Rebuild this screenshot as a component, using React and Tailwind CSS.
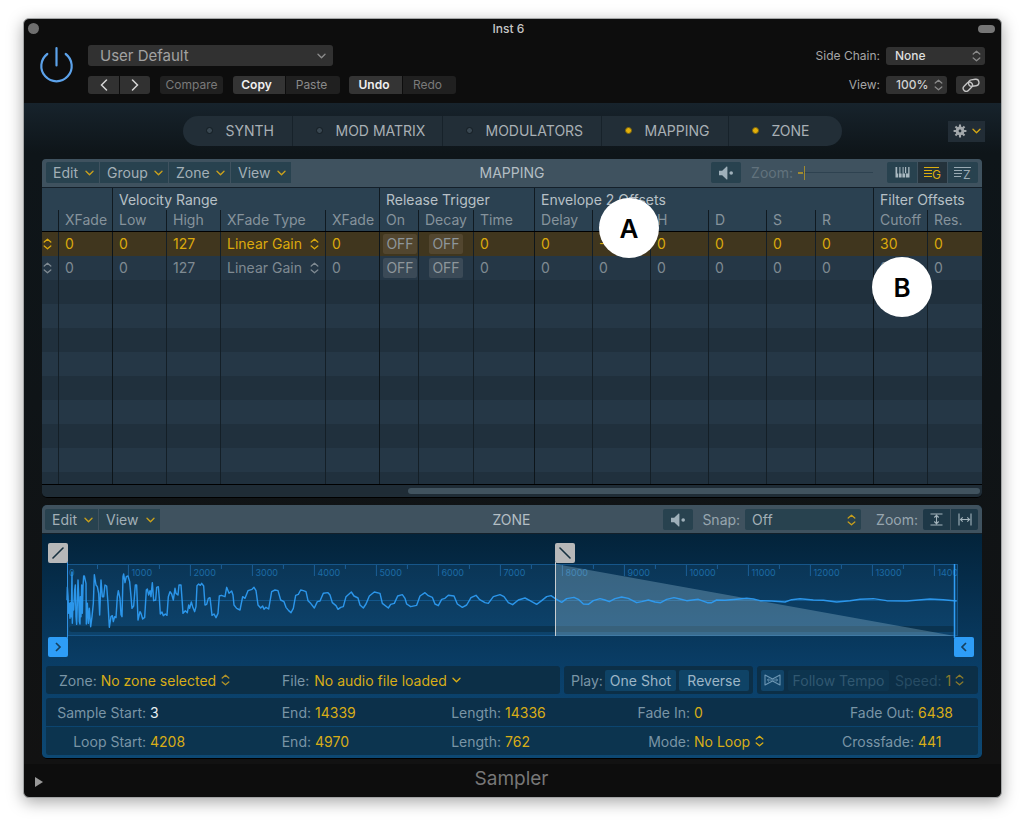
import React from "react";

const WAVE =
  "111,391 112,352 114,380 116,430 118,400 120,445 122,398 124,440 126,306 127,460 129,400 131,420 134,360 136,345 138,440 140,463 142,400 144,330 146,372 148,455 150,462 151,380 153,440 155,345 157,430 159,350 161,318 163,318 168,340 169,462 172,400 175,460 178,415 182,470 186,440 190,400 193,314 198,345 202,350 206,370 209,435 213,330 217,380 221,380 225,345 230,348 234,400 238,472 243,440 247,437 250,455 254,440 258,443 262,380 265,362 270,385 273,434 276,440 279,320 281,312 285,338 289,320 294,318 299,335 303,380 306,415 311,408 314,370 316,345 320,345 324,450 330,425 333,430 338,447 344,442 349,360 352,357 356,375 360,362 363,380 367,338 371,392 377,390 380,352 385,350 388,385 391,432 396,426 400,437 406,432 411,436 415,380 420,365 425,372 430,390 435,355 438,370 444,375 447,345 453,345 457,400 459,430 466,422 472,428 476,405 479,415 484,396 488,410 494,425 498,410 501,347 506,342 511,346 515,340 521,348 525,405 530,403 535,385 540,383 546,436 552,432 558,443 564,430 568,378 574,376 585,380 590,352 597,370 605,363 609,375 612,405 620,415 630,420 638,380 645,385 654,362 666,358 672,352 678,362 684,405 692,414 698,408 702,418 708,412 716,417 725,365 735,360 744,362 752,390 762,395 768,412 776,422 783,428 790,415 797,376 805,373 812,360 820,362 828,365 834,392 842,400 853,414 862,395 870,393 880,370 894,368 900,375 907,398 918,407 924,418 932,412 940,410 948,380 964,366 972,378 984,384 990,405 1000,414 1008,402 1018,378 1033,366 1050,370 1057,400 1075,414 1082,403 1093,400 1103,378 1117,374 1125,385 1130,402 1142,410 1160,406 1170,378 1185,368 1195,377 1207,382 1215,402 1225,407 1235,388 1245,385 1255,376 1272,378 1282,402 1297,412 1310,405 1323,383 1338,376 1348,388 1365,398 1375,400 1390,380 1410,374 1422,380 1435,398 1448,404 1465,390 1485,384 1500,392 1520,403 1535,392 1550,380 1563,377 1575,385 1595,397 1610,386 1632,382 1645,388 1660,402 1675,403 1690,392 1710,386 1725,390 1738,395 1755,386 1775,381 1795,385 1820,398 1835,395 1855,390 1875,396 1892,398 1910,388 1932,383 1950,387 1970,392 2005,388 2032,398 2045,398 2060,390 2085,391 2120,388 2150,385 2170,387 2190,392 2225,393 2265,396 2285,389 2310,386 2350,390 2380,391 2420,396 2460,392 2490,388 2530,386 2570,392 2630,393 2700,387 2740,389 2780,393";

const RULER = Array.from({ length: 14 }, (_, i) => (i + 1) * 1000);

const COLUMNS = [17, 54, 54, 54, 105, 54, 39, 55, 61, 58, 58, 58, 58, 49, 58, 54, 54];
const GROUPS = [
  { name: "", span: 2 },
  { name: "Velocity Range", span: 4 },
  { name: "Release Trigger", span: 3 },
  { name: "Envelope 2 Offsets", span: 6 },
  { name: "Filter Offsets", span: 2 },
];
const HEADS = ["", "XFade", "Low", "High", "XFade Type", "XFade", "On", "Decay", "Time", "Delay", "A", "H", "D", "S", "R", "Cutoff", "Res."];
const GROUP_ENDS = [1, 5, 8, 14];
const ROWS = [
  ["^", "0", "0", "127", "Linear Gain", "0", "OFF", "OFF", "0", "0", "-10", "0", "0", "0", "0", "30", "0"],
  ["^", "0", "0", "127", "Linear Gain", "0", "OFF", "OFF", "0", "0", "0", "0", "0", "0", "0", "0", "0"],
];

function Chevron({ className = "" }) {
  return (
    <svg viewBox="0 0 9 6" className={`h-[6px] w-[9px] shrink-0 ${className}`} fill="none" stroke="currentColor" strokeWidth="1.4" strokeLinecap="round" strokeLinejoin="round" aria-hidden="true">
      <path d="M1 1.2 4.5 4.7 8 1.2" />
    </svg>
  );
}

function UpDown({ className = "" }) {
  return (
    <svg viewBox="0 0 9 12" className={`pointer-events-none h-[12px] w-[9px] shrink-0 ${className}`} fill="none" stroke="currentColor" strokeWidth="1.3" strokeLinecap="round" strokeLinejoin="round" aria-hidden="true">
      <path d="M1.2 4 4.5 1.2 7.8 4M1.2 8 4.5 10.8 7.8 8" />
    </svg>
  );
}

function Speaker() {
  return (
    <svg viewBox="0 0 16 14" className="h-[14px] w-[16px] fill-[#9fb0ba]" aria-hidden="true">
      <path d="M1 4.8h3.2L8.6.6c.4-.3.8-.1.8.4v12c0 .5-.4.7-.8.4L4.2 9.2H1z" />
      <circle cx="13.2" cy="7" r="1.8" />
    </svg>
  );
}

function Gear() {
  return (
    <svg viewBox="-7 -7 14 14" className="h-[14px] w-[14px]" aria-hidden="true">
      <g stroke="#a3a8ab" strokeWidth="2.1">
        {[0, 45, 90, 135].map((a) => (
          <line key={a} x1="-6.4" x2="6.4" y1="0" y2="0" transform={`rotate(${a})`} />
        ))}
      </g>
      <circle r="4.4" fill="#a3a8ab" />
      <circle r="1.4" fill="#222d36" />
    </svg>
  );
}

function MenuButton({ children, className = "" }) {
  return (
    <button className={`flex items-center justify-between bg-[#28424f] pr-[5px] pl-[7px] text-[14px] text-[#a3b0b7] ${className}`}>
      {children}
      <Chevron className="text-[#c79f1c]" />
    </button>
  );
}

function Tab({ name, on, className }) {
  return (
    <button className={`flex h-full items-center gap-[13px] pb-px text-[14px] text-[#a9b0b5] ${className}`}>
      <span className={`h-[7px] w-[7px] rounded-full border ${on ? "border-[#7a6410] bg-[#e3b009]" : "border-[#131c22] bg-[#3a4852]"}`} />
      {name}
    </button>
  );
}

function Cell({ value, col, row }) {
  const selected = row === 0;
  if (value === "^")
    return (
      <button aria-label="Choose type" className="flex pl-px">
        <UpDown />
      </button>
    );
  if (value === "OFF")
    return (
      <button className={`block h-[20px] w-[34px] rounded-[2px] text-[14px] leading-[20px] text-[#8e969b] ${col === 6 ? "ml-[3px]" : "ml-[10px]"} ${selected ? "bg-[#52462f]" : "bg-[#3b4a57]"}`}>
        OFF
      </button>
    );
  if (value === "Linear Gain")
    return (
      <span className="flex items-center justify-between pr-[6px] pl-[6px]">
        <select aria-label="XFade Type" className="appearance-none bg-transparent">
          <option>Linear Gain</option>
        </select>
        <UpDown />
      </span>
    );
  return <span className="block pl-[6px]">{value}</span>;
}

function MappingTable() {
  return (
    <div className="h-[296px] overflow-hidden">
      <table className="w-full table-fixed border-separate border-spacing-0 text-left text-[14px] leading-[20px] whitespace-nowrap">
        <colgroup>
          {COLUMNS.map((w, i) => (
            <col key={i} style={{ width: w }} />
          ))}
        </colgroup>
        <thead className="bg-[#2b4151]">
          <tr>
            {GROUPS.map((g, i) => (
              <th key={i} colSpan={g.span} className={`h-[22px] p-0 pt-[2px] pl-[6px] font-normal text-[#b7c0c6] ${i < 4 ? "border-r border-[#101a21]" : ""}`}>
                {g.name}
              </th>
            ))}
          </tr>
          <tr>
            {HEADS.map((h, i) => (
              <th key={i} className="h-[22px] border-b border-black p-0 font-normal text-[#86939c]">
                <div className={`h-[21px] pl-[6px] leading-[19px] ${i < 16 ? "border-r border-[#101a21]" : ""}`}>{h}</div>
              </th>
            ))}
          </tr>
        </thead>
        <tbody>
          {Array.from({ length: 11 }, (_, r) => (
            <tr
              key={r}
              className={r === 0 ? "bg-[#40361e] text-[#dba90d]" : r % 2 ? "bg-[#253746] text-[#7f8a92]" : "bg-[#20303d]"}
            >
              {COLUMNS.map((_, c) => (
                <td key={c} className={`h-[24px] p-0 ${c < 16 ? "border-r" : ""} ${GROUP_ENDS.includes(c) ? "border-[#0d151a]" : "border-[#141f27]"}`}>
                  {ROWS[r] ? <Cell value={ROWS[r][c]} col={c} row={r} /> : null}
                </td>
              ))}
            </tr>
          ))}
        </tbody>
      </table>
    </div>
  );
}

function Waveform() {
  return (
    <div className="relative">
      <svg viewBox="0 0 940 132" className="block w-full" role="img" aria-label="Sample waveform">
        <defs>
          <linearGradient id="waveFill" x1="0" y1="0" x2="0" y2="1">
            <stop offset="0" stopColor="#0a3556" />
            <stop offset="1" stopColor="#0d436c" />
          </linearGradient>
          <clipPath id="rulerClip">
            <rect x="25" y="30" width="890" height="72" />
          </clipPath>
        </defs>
        <rect x="25" y="30" width="890" height="72" fill="url(#waveFill)" />
        <rect x="27" y="92" width="886" height="6" rx="3" fill="#0a3350" />
        <path d="M25 66.500H915" stroke="#12578c" />
        <rect x="25.500" y="30.500" width="890" height="71" fill="none" stroke="#16568a" />
        <g clipPath="url(#rulerClip)" fontSize="9" fontFamily="Inter, sans-serif" fill="#1c6ba5">
          <text x="27" y="42">0</text>
          <path d="M55.500 31v4" stroke="#1b5f96" />
          {RULER.map((n) => {
            const x = 24.4 + (n / 1000) * 62;
            return (
              <g key={n}>
                <path d={`M${x} 31v11M${x + 31} 31v4`} stroke="#1b5f96" />
                <text x={x + 3} y="42">{n}</text>
              </g>
            );
          })}
        </g>
        <polygon points="513.500,30 513.500,102 913,102" fill="#a4cde2" fillOpacity="0.3" />
        <g transform="translate(-12 -64) scale(0.33333)">
          <polyline points={WAVE} fill="none" stroke="#2f9df5" strokeWidth="4.300" strokeLinejoin="round" opacity="0.92" />
        </g>
        <path d="M513.500 28V102" stroke="#c9cdd0" />
        <path d="M25.500 28V104" stroke="#2f8fe0" strokeWidth="1" />
        <path d="M912.500 30V104" stroke="#2f9df5" strokeWidth="1.500" />
      </svg>
      <button aria-label="Fade in" className="absolute top-[7%] left-[0.600%] flex h-[20px] w-[20px] items-center justify-center rounded-[2px] bg-[#b7b8b9]">
        <svg viewBox="0 0 12 12" className="h-[12px] w-[12px]" stroke="#16303f" strokeWidth="1.6" strokeLinecap="round"><path d="M1 11 11 1" /></svg>
      </button>
      <button aria-label="Fade out" className="absolute top-[7%] left-[54.570%] flex h-[20px] w-[20px] items-center justify-center rounded-[2px] bg-[#b7b8b9]">
        <svg viewBox="0 0 12 12" className="h-[12px] w-[12px]" stroke="#16303f" strokeWidth="1.6" strokeLinecap="round"><path d="M1 1 11 11" /></svg>
      </button>
      <button aria-label="Sample start" className="absolute top-[78%] left-[0.600%] flex h-[20px] w-[20px] items-center justify-center rounded-[2px] bg-[#2e9df7]">
        <svg viewBox="0 0 8 10" className="h-[10px] w-[8px]" fill="none" stroke="#16405f" strokeWidth="1.7"><path d="M2 1 6 5 2 9" /></svg>
      </button>
      <button aria-label="Sample end" className="absolute top-[78%] left-[97%] flex h-[20px] w-[20px] items-center justify-center rounded-[2px] bg-[#2e9df7]">
        <svg viewBox="0 0 8 10" className="h-[10px] w-[8px]" fill="none" stroke="#16405f" strokeWidth="1.7"><path d="M6 1 2 5 6 9" /></svg>
      </button>
    </div>
  );
}

function Field({ id, label, value, white }) {
  return (
    <div className="flex items-center gap-[4px]">
      <label htmlFor={id} className="w-[100px] shrink-0 text-right text-[#7a95a6]">{label}</label>
      <input id={id} defaultValue={value} className={`w-[48px] bg-transparent outline-none ${white ? "text-[#e8eef2]" : "text-[#d8ad17]"}`} />
    </div>
  );
}

export default function App() {
  return (
    <div className="min-h-screen bg-white pt-[18px] pr-[22px] pb-[26px] pl-[23px] font-['Inter',sans-serif] text-[14px]">
      <div className="overflow-hidden rounded-[6px] border border-[#a3a5a6] bg-[#0d0d0d] shadow-[0_4px_16px_rgba(0,0,0,0.35)]">
        <header className="h-[84px] text-[12px]">
          <div className="flex h-[19px] items-center justify-between pr-[6px] pl-[4px]">
            <button aria-label="Close" className="h-[11px] w-[11px] rounded-full bg-[#6f6f6f]" />
            <h1 className="text-[12px] font-medium text-[#c6c6c6]">Inst 6</h1>
            <button aria-label="Collapse" className="h-[8px] w-[17px] rounded-full bg-[#767676]" />
          </div>
          <div className="flex justify-between pt-[7px] pr-[16px] pl-[15px]">
            <div className="flex">
              <button aria-label="Power" className="h-[38px] w-[35px]">
                <svg viewBox="0 0 35 38" className="h-[38px] w-[35px]" fill="none" stroke="#5ca2ea" strokeWidth="2.200" strokeLinecap="round">
                  <path d="M17.500 3V20.500M8.300 9a15.200 15.200 0 1 0 18.400 0" />
                </svg>
              </button>
              <div className="ml-[14px] flex flex-col gap-[10px]">
                <div className="flex h-[21px] w-[245px] items-center rounded-[3px] bg-[#313131] pr-[7px]">
                  <select aria-label="Preset" className="flex-1 appearance-none bg-transparent pl-[12px] text-[15px] leading-[20px] text-[#a2a2a2]">
                    <option>User Default</option>
                  </select>
                  <Chevron className="text-[#8a8a8a]" />
                </div>
                <div className="flex h-[18px] items-stretch text-[12px] leading-[18px]">
                  <button aria-label="Previous preset" className="flex w-[31px] items-center justify-center rounded-l-[3px] bg-[#313131]">
                    <svg viewBox="0 0 8 12" className="h-[12px] w-[8px]" fill="none" stroke="#d5d5d5" strokeWidth="1.500" strokeLinecap="round"><path d="M6.500 1 1.500 6 6.500 11" /></svg>
                  </button>
                  <button aria-label="Next preset" className="ml-px flex w-[30px] items-center justify-center rounded-r-[3px] bg-[#313131]">
                    <svg viewBox="0 0 8 12" className="h-[12px] w-[8px]" fill="none" stroke="#d5d5d5" strokeWidth="1.500" strokeLinecap="round"><path d="M1.500 1 6.500 6 1.500 11" /></svg>
                  </button>
                  <button className="ml-[10px] w-[63px] rounded-[3px] bg-[#202020] text-[#7a7a7a]">Compare</button>
                  <button className="ml-[10px] w-[52px] rounded-l-[3px] bg-[#343434] pr-[5px] font-semibold text-[#f0f0f0]">Copy</button>
                  <button className="ml-px w-[54px] rounded-r-[3px] bg-[#202020] pr-[3px] text-[#8a8a8a]">Paste</button>
                  <button className="ml-[9px] w-[53px] rounded-l-[3px] bg-[#343434] pr-[3px] font-semibold text-[#f0f0f0]">Undo</button>
                  <button className="ml-px w-[53px] rounded-r-[3px] bg-[#202020] pr-[4px] text-[#7a7a7a]">Redo</button>
                </div>
              </div>
            </div>
            <div className="flex flex-col gap-[11px] pt-[2px] leading-[18px] text-[#a6a6a6]">
              <div className="flex items-center justify-end gap-[6px]">
                <label htmlFor="side">Side Chain:</label>
                <div className="flex h-[18px] w-[99px] items-center rounded-[3px] bg-[#313131] pr-[4px] pl-[9px]">
                  <select id="side" className="flex-1 appearance-none bg-transparent font-medium text-[#dedede]"><option>None</option></select>
                  <UpDown className="text-[#8a8a8a]" />
                </div>
              </div>
              <div className="flex items-center justify-end">
                <label htmlFor="view">View:</label>
                <div className="ml-[6px] flex h-[18px] w-[61px] items-center rounded-[3px] bg-[#313131] pr-[4px] pl-[10px]">
                  <select id="view" className="flex-1 appearance-none bg-transparent font-medium text-[#d0d0d0]"><option>100%</option></select>
                  <UpDown className="text-[#8a8a8a]" />
                </div>
                <button aria-label="Link" className="ml-[9px] flex h-[18px] w-[29px] items-center justify-center rounded-[3px] bg-[#313131]">
                  <svg viewBox="0 0 18 14" className="h-[14px] w-[18px]" fill="none" stroke="#c4c4c4" strokeWidth="1.400">
                    <rect x="6.500" y="1.500" width="10.500" height="6.500" rx="3.250" transform="rotate(-8 12 5)" />
                    <rect x="0.500" y="5.600" width="10.500" height="6" rx="3" transform="rotate(-45 6 8.600)" />
                  </svg>
                </button>
              </div>
            </div>
          </div>
        </header>

        <main className="bg-[linear-gradient(#17232c,#0e1519_50px,#0f1417_300px,#121212)] pr-[19px] pb-[5px] pl-[18px]">
          <div className="grid h-[56px] grid-cols-[1fr_auto_1fr] items-center">
            <span />
            <nav className="flex h-[30px] divide-x divide-[#17222a] overflow-hidden rounded-full bg-[#222e37]">
              <Tab name="SYNTH" className="w-[110px] pl-[23px]" />
              <Tab name="MOD MATRIX" className="w-[150px] pl-[23px]" />
              <Tab name="MODULATORS" className="w-[159px] pl-[23px]" />
              <Tab name="MAPPING" on className="w-[127px] pl-[23px]" />
              <Tab name="ZONE" on className="w-[113px] pl-[23px]" />
            </nav>
            <button aria-label="Settings" className="-mr-[3px] flex h-[21px] w-[37px] items-center justify-between justify-self-end bg-[#222d36] pr-[4px] pl-[5px]">
              <Gear />
              <Chevron className="text-[#d0a414]" />
            </button>
          </div>

          <section className="relative rounded-[5px] border-b border-black bg-[#1f2c36]">
            <div className="grid h-[29px] grid-cols-[1fr_auto_1fr] items-center rounded-t-[4px] border-b border-[#14202a] bg-[#3f525f] px-[4px] pb-px">
              <div className="flex h-[21px] gap-px overflow-hidden rounded-[2px]">
                <MenuButton className="w-[53px]">Edit</MenuButton>
                <MenuButton className="w-[68px]">Group</MenuButton>
                <MenuButton className="w-[61px]">Zone</MenuButton>
                <MenuButton className="w-[60px]">View</MenuButton>
              </div>
              <h2 className="text-[14px] text-[#b4bec4]">MAPPING</h2>
              <div className="flex items-center justify-end">
                <button aria-label="Audition" className="flex h-[21px] w-[30px] items-center justify-center rounded-[2px] bg-[#28424f]"><Speaker /></button>
                <label htmlFor="zoom" className="ml-[10px] text-[#62727d]">Zoom:</label>
                <input id="zoom" type="range" min="0" max="100" defaultValue="0" disabled className="ml-[5px] h-[20px] w-[75px] appearance-none bg-[linear-gradient(#2e4250,#2e4250)] bg-[length:100%_1px] bg-center bg-no-repeat [&::-webkit-slider-thumb]:h-[16px] [&::-webkit-slider-thumb]:w-[8px] [&::-webkit-slider-thumb]:appearance-none [&::-webkit-slider-thumb]:bg-[linear-gradient(#a08a30,#a08a30),linear-gradient(#a08a30,#a08a30)] [&::-webkit-slider-thumb]:bg-[length:1px_14px,5px_2px] [&::-webkit-slider-thumb]:bg-[position:6px_center,left_center] [&::-webkit-slider-thumb]:bg-no-repeat" />
                <div className="ml-[14px] flex h-[21px] gap-px overflow-hidden rounded-[2px]">
                  <button aria-label="Keyboard view" className="flex w-[30px] items-center justify-center bg-[#28424f]">
                    <svg viewBox="0 0 15 11" className="h-[11px] w-[15px]" aria-hidden="true">
                      <rect x="0.500" y="0" width="14" height="10.500" fill="#a9b8c0" />
                      <path d="M2.200 0h2.200v6.500H2.200zM5.400 0h2.200v6.500H5.400zM8.600 0h1.400v6.500H8.600zM11.200 0h2v6.500h-2z" fill="#28424f" />
                      <path d="M3.500 6v5M7 6v5M10.500 6v5" stroke="#28424f" strokeWidth="0.800" />
                    </svg>
                  </button>
                  <button aria-label="Group view" className="flex w-[29px] items-center justify-center bg-[#24323b] text-[#dcae10]">
                    <svg viewBox="0 0 22 20" className="h-[20px] w-[22px]" aria-hidden="true">
                      <path d="M2 4.500h15M2 7.500h8M2 10.500h8M2 13.500h8" stroke="currentColor" strokeWidth="1.200" />
                      <text x="10" y="16" fontSize="12" fontFamily="Inter, sans-serif" fill="currentColor">G</text>
                    </svg>
                  </button>
                  <button aria-label="Zone view" className="flex w-[30px] items-center justify-center bg-[#28424f] text-[#9aaab3]">
                    <svg viewBox="0 0 22 20" className="h-[20px] w-[22px]" aria-hidden="true">
                      <path d="M2 4.500h17M2 7.500h8M2 10.500h8M2 13.500h7" stroke="currentColor" strokeWidth="1.100" />
                      <text x="11" y="16" fontSize="12" fontFamily="Inter, sans-serif" fill="currentColor">Z</text>
                    </svg>
                  </button>
                </div>
              </div>
            </div>
            <MappingTable />
            <div className="flex h-[13px] items-center justify-end border-t border-black pr-[2px]">
              <div className="h-[6px] w-[61%] rounded-full bg-[#41535f]" />
            </div>
            <div className="absolute top-[39px] left-[557px] flex h-[60px] w-[60px] items-center justify-center rounded-full bg-white text-[26px] font-semibold text-black">A</div>
            <div className="absolute top-[98px] left-[830px] flex h-[60px] w-[60px] items-center justify-center rounded-full bg-white text-[26px] font-semibold text-black">B</div>
          </section>

          <section className="mt-[7px] overflow-hidden rounded-[5px] border-b border-black bg-[linear-gradient(#03233a_28px,#0a3f69_170px,#0d4873)]">
            <div className="grid h-[29px] grid-cols-[1fr_auto_1fr] items-center border-b border-[#14202a] bg-[#3f525f] pt-px pr-[4px] pl-[3px]">
              <div className="flex h-[21px] gap-px overflow-hidden rounded-[2px]">
                <MenuButton className="w-[53px]">Edit</MenuButton>
                <MenuButton className="w-[61px]">View</MenuButton>
              </div>
              <h2 className="text-[14px] text-[#b4bec4]">ZONE</h2>
              <div className="flex items-center justify-end text-[#98a6af]">
                <button aria-label="Audition" className="flex h-[21px] w-[30px] items-center justify-center rounded-[2px] bg-[#28424f]"><Speaker /></button>
                <label htmlFor="snap" className="ml-[9px]">Snap:</label>
                <div className="ml-[5px] flex h-[21px] w-[116px] items-center rounded-[2px] bg-[#28424f] pr-[5px] pl-[7px]">
                  <select id="snap" className="flex-1 appearance-none bg-transparent text-[#a3b0b7]"><option>Off</option></select>
                  <UpDown className="text-[#c79f1c]" />
                </div>
                <span className="ml-[15px]">Zoom:</span>
                <div className="ml-[5px] flex h-[21px] gap-px overflow-hidden rounded-[2px]">
                  <button aria-label="Zoom vertically" className="flex w-[27px] items-center justify-center bg-[#1e3847]">
                    <svg viewBox="0 0 13 13" className="h-[13px] w-[13px]" fill="none" stroke="#a3b4bd" strokeWidth="1.100"><path d="M.500 1h12M.500 12h12M6.500 2.500v8M4.300 4.500 6.500 2.300 8.700 4.500M4.300 8.500 6.500 10.700 8.700 8.500" /></svg>
                  </button>
                  <button aria-label="Zoom horizontally" className="flex w-[27px] items-center justify-center bg-[#1e3847]">
                    <svg viewBox="0 0 14 13" className="h-[13px] w-[14px]" fill="none" stroke="#a3b4bd" strokeWidth="1.100"><path d="M1 .500v12M13 .500v12M2.500 6.500h9M4.700 4.300 2.500 6.500 4.700 8.700M9.300 4.300 11.500 6.500 9.300 8.700" /></svg>
                  </button>
                </div>
              </div>
            </div>

            <Waveform />

            <div className="flex flex-col gap-[4px] px-[4px] pb-[3px]">
              <div className="flex h-[28px] gap-[4px]">
                <div className="flex flex-1 items-center rounded-[3px] bg-[#0c2f47] pl-[13px] text-[#7a95a6]">
                  <div className="flex w-[223px] items-center gap-[4px]">
                    <label htmlFor="zone">Zone:</label>
                    <select id="zone" className="appearance-none bg-transparent text-[#d8ad17]"><option>No zone selected</option></select>
                    <UpDown className="text-[#b0932a]" />
                  </div>
                  <div className="flex items-center gap-[5px]">
                    <label htmlFor="file">File:</label>
                    <select id="file" className="appearance-none bg-transparent text-[#d8ad17]"><option>No audio file loaded</option></select>
                    <Chevron className="text-[#d8ad17]" />
                  </div>
                </div>
                <div className="flex w-[189px] items-center rounded-[3px] bg-[#0c2f47] pl-[7px] text-[#7a95a6]">
                  Play:
                  <button className="ml-auto h-[21px] w-[71px] rounded-[2px] bg-[#0f4366] text-[#9db6c6]">One Shot</button>
                  <button className="mr-[4px] ml-[3px] h-[21px] w-[70px] rounded-[2px] bg-[#0f4366] text-[#9db6c6]">Reverse</button>
                </div>
                <div className="flex w-[221px] items-center rounded-[3px] bg-[#0c2f47] pl-[4px] text-[#274c64]">
                  <button aria-label="Flex" className="flex h-[21px] w-[23px] items-center justify-center rounded-[2px] bg-[#114468]">
                    <svg viewBox="0 0 17 12" className="h-[12px] w-[17px]" fill="none" stroke="#6c96b3" strokeWidth="1.100" strokeLinejoin="round" aria-hidden="true">
                      <path d="M1 1 8.500 5 16 1V11L8.500 7 1 11z" />
                      <path d="M3.500 6h10M5 4.400 3.400 6 5 7.600M12 4.400 13.600 6 12 7.600" strokeWidth="0.900" />
                    </svg>
                  </button>
                  <button disabled className="ml-[4px] h-[21px] w-[101px] rounded-[2px] bg-[#0d344e] text-[#315871]">Follow Tempo</button>
                  <label htmlFor="speed" className="ml-[6px]">Speed:</label>
                  <select id="speed" disabled className="ml-[4px] appearance-none bg-transparent text-[#8a7a2c] opacity-100"><option>1</option></select>
                  <UpDown className="ml-[4px] text-[#8a7a2c]" />
                </div>
              </div>
              <div className="flex flex-col gap-px overflow-hidden rounded-[3px]">
                <div className="grid h-[28px] grid-cols-[165fr_190fr_189fr_224fr_164fr] items-center bg-[#0c304a]">
                  <Field id="ss" label="Sample Start:" value="3" white />
                  <Field id="se" label="End:" value="14339" />
                  <Field id="sl" label="Length:" value="14336" />
                  <Field id="fi" label="Fade In:" value="0" />
                  <Field id="fo" label="Fade Out:" value="6438" />
                </div>
                <div className="grid h-[28px] grid-cols-[165fr_190fr_189fr_224fr_164fr] items-center bg-[#0c344f]">
                  <Field id="ls" label="Loop Start:" value="4208" />
                  <Field id="le" label="End:" value="4970" />
                  <Field id="ll" label="Length:" value="762" />
                  <div className="flex items-center gap-[4px] text-[#d8ad17]">
                    <label htmlFor="mode" className="w-[100px] text-right text-[#7a95a6]">Mode:</label>
                    <select id="mode" className="appearance-none bg-transparent"><option>No Loop</option></select>
                    <UpDown />
                  </div>
                  <Field id="cf" label="Crossfade:" value="441" />
                </div>
              </div>
            </div>
          </section>
        </main>

        <footer className="grid h-[33px] grid-cols-[1fr_auto_1fr] items-center pr-[2px] pb-[3px]">
          <button aria-label="Expand" className="mt-[6px] ml-[11px] h-[10px] w-[8px]">
            <svg viewBox="0 0 8 10" className="h-[10px] w-[8px] fill-[#9a9a9a]"><path d="M0 0 8 5 0 10z" /></svg>
          </button>
          <div className="text-[19px] leading-[28px] text-[#777777]">Sampler</div>
          <span />
        </footer>
      </div>
    </div>
  );
}
